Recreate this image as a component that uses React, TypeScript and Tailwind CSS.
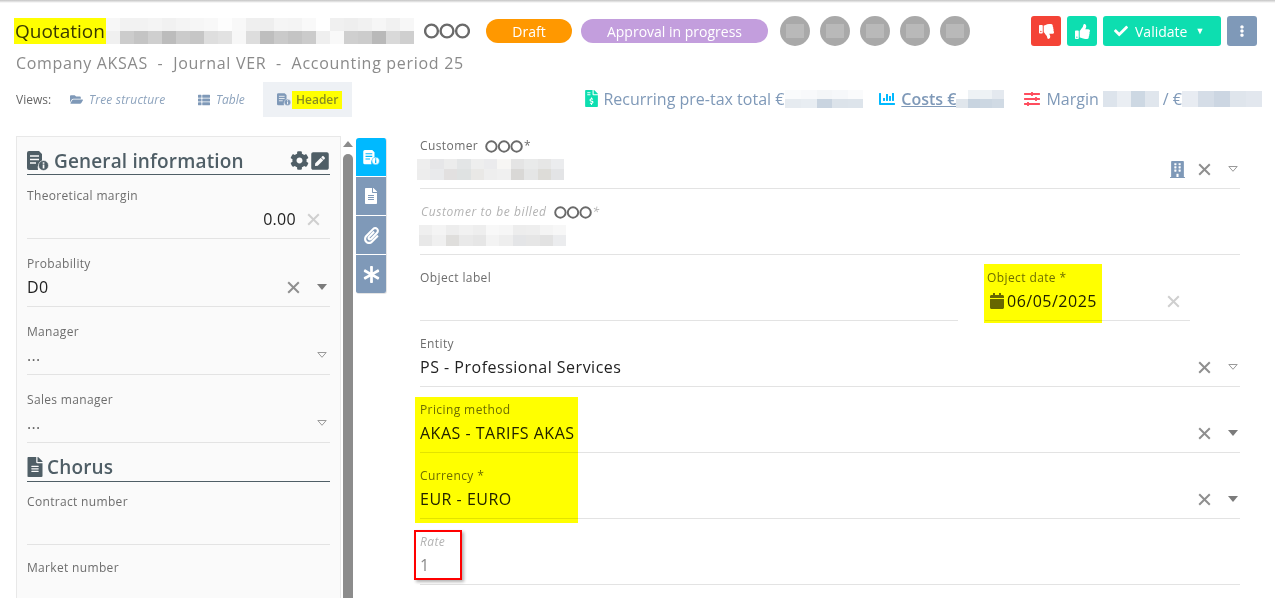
import type { ReactNode } from "react";
import {
  FaAsterisk,
  FaBuilding,
  FaCalendar,
  FaChartBar,
  FaCheck,
  FaCog,
  FaEllipsisV,
  FaFileAlt,
  FaFileInvoiceDollar,
  FaFolderOpen,
  FaPaperclip,
  FaPenSquare,
  FaSlidersH,
  FaThList,
  FaThumbsDown,
  FaThumbsUp,
} from "react-icons/fa";

// pixelated (anonymised) areas of the screenshot
const Pixels = ({ rows, cell, h }: { rows: string[][]; cell: number; h: number }) => (
  <div className="flex flex-col shrink-0">
    {rows.map((row, i) => (
      <div key={i} className="flex">
        {row.map((c, j) => (
          <div key={j} style={{ background: c, width: cell, height: h }} />
        ))}
      </div>
    ))}
  </div>
);

const titleBlur = [
  ["#f7f7f7", "#f2f2f2", "#f2f2f2", "#f4f4f4", "#f1f1f1", "#f4f4f4", "#f6f6f6", "#f8f8f8", "#fdfdfd", "#f8f8f8", "#efefef", "#eeeeee", "#f5f5f5", "#f4f4f4", "#f9f9f9", "#ffffff", "#f0f0f0", "#eeeeee", "#f1f1f1", "#f6f6f6", "#f1f1f1", "#f7f7f7"],
  ["#f0f0f0", "#cccccc", "#c4c4c4", "#cfcfcf", "#bcbcbc", "#cbcbcb", "#c6c6c6", "#dedede", "#e2e2e2", "#f7f7f7", "#dddddd", "#bebebe", "#cacaca", "#c4c4c4", "#cbcbcb", "#efefef", "#f9f9f9", "#cfcfcf", "#cccccc", "#b9b9b9", "#d9d9d9", "#cfcfcf"],
];
const customerBlur = [
  ["#eeeeee", "#e6e6e8", "#ececec", "#e3e5e6", "#eeeeee", "#ebebed", "#f7f6f4", "#e4e4e4", "#e9eaea", "#e6e6e6", "#ebecee"],
  ["#ededed", "#e9eaec", "#e2e0e0", "#dfe2e2", "#e9e8e6", "#eeeeee", "#f0f0f0", "#d9d8d6", "#e5e6e6", "#dddcd8", "#e3e4e6"],
];
const billedBlur = [
  ["#efefef", "#f4f4f4", "#ededed", "#f1f1f1", "#eeeeee", "#f8f8f8", "#f6f6f6", "#ededed", "#eeeeee", "#f4f4f4", "#f7f7f7"],
  ["#e8e8e8", "#f0f0f0", "#dfdedc", "#e9e9e9", "#e6e6e6", "#f3f3f3", "#eeeeee", "#e4e5e7", "#e6e6e6", "#e2e2e2", "#ebecee"],
];
const blue1 = [
  ["#fafbfc", "#f8f9fb", "#f4f6f8", "#f6f8fa", "#fafbfc"],
  ["#e6ebf0", "#e8edf2", "#c9d4e0", "#dce3ea", "#dde4eb"],
];
const blue2 = [
  ["#ffffff", "#eef2f5", "#eef2f5", "#e4e9ef"],
  ["#e0e6ec", "#c8d4e0", "#ccd7e2", "#d0dae4"],
];
const blue3 = [["#dde4ec", "#eaeef3", "#cdd8e3", "#e0e6ed"]];
const blue4 = [["#e8ecf2", "#d5dde7", "#ccd6e2", "#dfe5ec", "#e2e7ee"]];

const Circles = ({ className }: { className: string }) => (
  <svg viewBox="0 0 46 16" className={className} fill="none" stroke="#6a6a6a" strokeWidth="2.4">
    <circle cx="7.5" cy="8" r="6.4" />
    <circle cx="23" cy="8" r="6.4" />
    <circle cx="38.5" cy="8" r="6.4" />
  </svg>
);

const FileInfo = ({ className, bg = "#ffffff" }: { className: string; bg?: string }) => (
  <svg viewBox="0 0 22 20" className={className}>
    <path d="M2 0h10l3 3v8a6 6 0 0 0-4 8H2a2 2 0 0 1-2-2V2a2 2 0 0 1 2-2z" fill="currentColor" />
    <path d="M3 5h9M3 8.5h9M3 12h6" stroke={bg} strokeWidth="1.4" />
    <circle cx="16.5" cy="14.5" r="5" fill="currentColor" stroke={bg} strokeWidth="0.6" />
    <rect x="15.7" y="13.5" width="1.7" height="4" fill={bg} />
    <rect x="15.7" y="11.3" width="1.7" height="1.5" fill={bg} />
  </svg>
);

const CaretSolid = () => (
  <svg viewBox="0 0 10 6" className="w-[10px] h-[6px]">
    <path d="M0 0h10L5 6z" fill="#7b7b7b" />
  </svg>
);

const CaretOutline = () => (
  <svg viewBox="0 0 10 6" className="w-[10px] h-[6px]">
    <path d="M.8.5h8.4L5 5.3z" fill="none" stroke="#9a9a9a" />
  </svg>
);

const Avatar = () => (
  <div className="w-[30px] h-[30px] rounded-full bg-[#a9a9a9] flex items-center justify-center">
    <div className="w-[18px] h-[14px] bg-[#b9b9b9]" />
  </div>
);

const Field = ({
  label,
  children,
  right,
  className = "",
}: {
  label: ReactNode;
  children?: ReactNode;
  right?: ReactNode;
  className?: string;
}) => (
  <div className={`h-[66px] border-b border-[#e3e3e3] pt-[14px] ${className}`}>
    <div className="text-[12px] leading-[18px] tracking-[0.4px] text-[#6d6d6d] flex items-center">{label}</div>
    <div className="flex items-center h-[28px] text-[16px] tracking-[0.5px] text-[#222]">
      <div className="flex-1 min-w-0">{children}</div>
      {right}
    </div>
  </div>
);

const SideField = ({
  label,
  children,
  right,
}: {
  label: string;
  children?: ReactNode;
  right?: ReactNode;
}) => (
  <div className="h-[68px] border-b border-[#e3e3e3] pt-[16px]">
    <div className="text-[12px] leading-[18px] tracking-[0.33px] text-[#6d6d6d]">{label}</div>
    <div className="flex items-center h-[28px] text-[16px] tracking-[0.3px] text-[#222]">
      <div className="flex-1">{children}</div>
      {right}
    </div>
  </div>
);

const Clear = ({ light = false }: { light?: boolean }) => (
  <svg
    viewBox="0 0 17 17"
    className={`w-[17px] h-[17px] ${light ? "text-[#cfcfcf]" : "text-[#8f8f8f]"}`}
    stroke="currentColor"
    strokeWidth="2"
  >
    <path d="M3.2 3.2l10.6 10.6M13.8 3.2L3.2 13.8" />
  </svg>
);

const SideTab = ({ active, children }: { active?: boolean; children: ReactNode }) => (
  <div
    className={`h-[38px] flex items-center justify-center text-white ${active ? "bg-[#00b9ff]" : "bg-[#7f99b8]"}`}
  >
    {children}
  </div>
);

export default function App() {
  return (
    <div className="relative h-[598px] overflow-hidden bg-white font-['Open_Sans',sans-serif]">
      <div className="h-[3px] bg-gradient-to-b from-[#c4c4c4] to-white" />

      {/* header */}
      <div className="flex items-center h-[56px] pl-[14px] pr-[18px]">
        <span className="bg-[#ffff00] text-[19px] leading-[26px] text-[#3a3a00] w-[92px] shrink-0 pl-[1px]">
          Quotation
        </span>
        <Pixels rows={titleBlur} cell={14} h={13} />
        <Circles className="w-[46px] h-[16px] ml-[10px]" />
        <div className="ml-[16px] w-[86px] h-[24px] rounded-full bg-[#ff9800] text-white text-[14px] flex items-center justify-center">
          Draft
        </div>
        <div className="ml-[9px] w-[187px] h-[24px] rounded-full bg-[#c39edd] text-white text-[14px] flex items-center justify-center">
          Approval in progress
        </div>
        <div className="ml-[12px] flex gap-[10px]">
          <Avatar />
          <Avatar />
          <Avatar />
          <Avatar />
          <Avatar />
        </div>
        <div className="ml-auto flex gap-[6px] text-white">
          <div className="w-[30px] h-[30px] rounded-[3px] bg-[#f44336] flex items-center justify-center">
            <FaThumbsDown className="text-[15px]" />
          </div>
          <div className="w-[30px] h-[30px] rounded-[3px] bg-[#0ddeb0] flex items-center justify-center">
            <FaThumbsUp className="text-[15px]" />
          </div>
          <div className="w-[118px] h-[30px] rounded-[3px] bg-[#0ddeb0] flex items-center pl-[11px] gap-[7px] text-[14px]">
            <FaCheck className="text-[14px]" />
            Validate
            <span className="text-[9px] ml-[1px]">▼</span>
          </div>
          <div className="w-[30px] h-[30px] rounded-[3px] bg-[#7f99b8] flex items-center justify-center">
            <FaEllipsisV className="text-[12px]" />
          </div>
        </div>
      </div>

      <div className="h-[22px] -mt-[7px] pl-[16px] flex items-center text-[16px] tracking-[0.7px] text-[#8a8a8a] whitespace-pre">
        Company AKSAS  -  Journal VER  -  Accounting period 25
      </div>

      <div className="flex items-center h-[35px] mt-[8px] pl-[16px] pr-[13px]">
        <span className="text-[12px] text-[#666] w-[54px]">Views:</span>
        <div className="flex items-center gap-[6px] text-[12px] tracking-[0.2px] italic text-[#8da3bd] w-[128px]">
          <FaFolderOpen className="text-[13px] text-[#7f99b8]" />
          Tree structure
        </div>
        <div className="flex items-center gap-[6px] text-[12px] italic text-[#8da3bd] w-[65px]">
          <FaThList className="text-[12px] text-[#7f99b8]" />
          Table
        </div>
        <div className="flex items-center h-[35px] w-[89px] pl-[14px] gap-[1px] bg-[#eef1f5]">
          <FileInfo className="w-[14px] h-[13px] text-[#7f99b8]" bg="#eef1f5" />
          <span className="bg-[#ffff00] text-[12px] font-semibold text-[#8a8f20] px-[4px] leading-[18px]">Header</span>
        </div>
        <div className="ml-auto -mt-[2px] flex items-center text-[16px] text-[#7f99b8]">
          <FaFileInvoiceDollar className="text-[#0ddeb0] text-[17px] mr-[3px]" />
          <span>Recurring pre-tax total €</span>
          <span className="ml-[1px]">
            <Pixels rows={blue1} cell={15.6} h={9} />
          </span>
          <FaChartBar className="text-[#00b9ff] text-[16px] ml-[16px] mr-[6px]" />
          <span className="underline font-semibold">Costs €</span>
          <Pixels rows={blue2} cell={12} h={9} />
          <FaSlidersH className="text-[#ff4d5e] text-[16px] ml-[20px] mr-[6px]" />
          <span>Margin</span>
          <span className="ml-[4px]">
            <Pixels rows={blue3} cell={14} h={16} />
          </span>
          <span className="ml-[4px]">/ €</span>
          <Pixels rows={blue4} cell={16} h={16} />
        </div>
      </div>

      {/* body */}
      <div className="flex items-start mt-[19px]">
        <div className="ml-[16px] w-[325px] h-[470px] bg-[#fafafa] border border-[#e8e8e8] px-[10px] pt-[10px] shrink-0">
          <div className="flex items-center h-[28px] border-b border-[#4f5e66] text-[#4f5e66]">
            <FileInfo className="w-[22px] h-[20px] mr-[5px]" bg="#fafafa" />
            <span className="text-[19px] tracking-[0.15px] font-semibold mt-[1px]">General information</span>
            <FaCog className="ml-auto text-[19px]" />
            <FaPenSquare className="ml-[1px] text-[20px]" />
          </div>
          <div className="-mt-[4px]">
            <SideField
              label="Theoretical margin"
              right={
                <span className="pr-[8px] flex">
                  <Clear light />
                </span>
              }
            >
              <div className="text-right pr-[9px]">0.00</div>
            </SideField>
            <SideField
              label="Probability"
              right={
                <span className="flex items-center gap-[15px] pr-[3px]">
                  <Clear />
                  <CaretSolid />
                </span>
              }
            >
              D0
            </SideField>
            <SideField label="Manager" right={<span className="pr-[3px] flex"><CaretOutline /></span>}>
              <span className="text-[#666]">...</span>
            </SideField>
            <SideField label="Sales manager" right={<span className="pr-[3px] flex"><CaretOutline /></span>}>
              <span className="text-[#666]">...</span>
            </SideField>
          </div>
          <div className="flex items-center h-[39px] pt-[10px] border-b border-[#4f5e66] text-[#4f5e66]">
            <FaFileAlt className="text-[20px] -ml-[2px] mr-[2px]" />
            <span className="text-[19px] tracking-[0.15px] font-semibold">Chorus</span>
          </div>
          <div className="h-[63px] border-b border-[#e3e3e3] pt-[11px] text-[12px] leading-[18px] tracking-[0.33px] text-[#6d6d6d]">
            Contract number
          </div>
          <div className="pt-[14px] text-[12px] leading-[18px] tracking-[0.33px] text-[#6d6d6d]">Market number</div>
        </div>

        {/* panel scrollbar */}
        <div className="ml-[2px] w-[10px] shrink-0 flex flex-col items-center pt-[5px]">
          <svg viewBox="0 0 10 6" className="w-[10px] h-[6px]">
            <path d="M5 0l5 6H0z" fill="#8c8c8c" />
          </svg>
          <div className="mt-[7px] w-[10px] h-[460px] rounded-t-[5px] bg-[#8c8c8c]" />
        </div>

        <div className="ml-[3px] w-[31px] mt-[2px] flex flex-col gap-[1px] rounded-[3px] overflow-hidden border-b border-r border-[#e4e4e4] shrink-0">
          <SideTab active>
            <FileInfo className="w-[17px] h-[15px]" bg="#00b9ff" />
          </SideTab>
          <SideTab>
            <FaFileAlt className="text-[16px]" />
          </SideTab>
          <SideTab>
            <FaPaperclip className="text-[17px]" />
          </SideTab>
          <SideTab>
            <FaAsterisk className="text-[17px]" />
          </SideTab>
        </div>

        {/* main form */}
        <div className="ml-[33px] w-[820px] shrink-0 -mt-[13px]">
          <Field
            label={
              <>
                Customer <Circles className="w-[38px] h-[13px] ml-[7px] mr-[1px]" />*
              </>
            }
            right={
              <span className="flex items-center gap-[15px] pr-[2px]">
                <FaBuilding className="text-[17px] text-[#7f99b8] -mr-[5px]" />
                <Clear />
                <CaretOutline />
              </span>
            }
          >
            <div className="-ml-[3px]">
              <Pixels rows={customerBlur} cell={13.4} h={10.5} />
            </div>
          </Field>
          <Field
            label={
              <>
                <span className="italic text-[#b3b3b3] tracking-[0.6px] pl-[1px]">Customer to be billed</span>
                <Circles className="w-[38px] h-[13px] ml-[7px] mr-[1px]" />
                <span className="italic text-[#b3b3b3]">*</span>
              </>
            }
          >
            <div className="-ml-[1px]">
              <Pixels rows={billedBlur} cell={13.4} h={10.5} />
            </div>
          </Field>
          <div className="flex">
            <Field label="Object label" className="w-[538px]" />
            <Field
              label="Object date *"
              className="ml-[27px] w-[205px] pl-[2px]"
              right={
                <span className="pr-[8px] flex">
                  <Clear light />
                </span>
              }
            >
              <span className="flex items-center gap-[2px] ml-[2px]">
                <FaCalendar className="text-[16px] text-[#666]" />
                06/05/2025
              </span>
            </Field>
          </div>
          <Field
            label="Entity"
            right={
              <span className="flex items-center gap-[15px] pr-[2px]">
                <Clear />
                <CaretOutline />
              </span>
            }
          >
            PS - Professional Services
          </Field>
          <Field
            label="Pricing method"
            right={
              <span className="flex items-center gap-[15px] pr-[2px]">
                <Clear />
                <CaretSolid />
              </span>
            }
          >
            AKAS - TARIFS AKAS
          </Field>
          <Field
            label="Currency *"
            right={
              <span className="flex items-center gap-[15px] pr-[2px]">
                <Clear />
                <CaretSolid />
              </span>
            }
          >
            EUR - EURO
          </Field>
          <Field label={<span className="italic text-[#b3b3b3]">Rate</span>}>
            <span className="text-[#8a8a8a]">1</span>
          </Field>
        </div>
      </div>

      {/* annotations laid over the screenshot */}
      <div className="absolute left-[984px] top-[264px] w-[118px] h-[59px] bg-[#ffff00] mix-blend-multiply" />
      <div className="absolute left-[415px] top-[397px] w-[163px] h-[126px] bg-[#ffff00] mix-blend-multiply" />
      <div className="absolute left-[414px] top-[530px] w-[48px] h-[50px] border-2 border-[#ff0000] shadow-[2px_2px_3px_rgba(0,0,0,0.3)]" />
    </div>
  );
}
